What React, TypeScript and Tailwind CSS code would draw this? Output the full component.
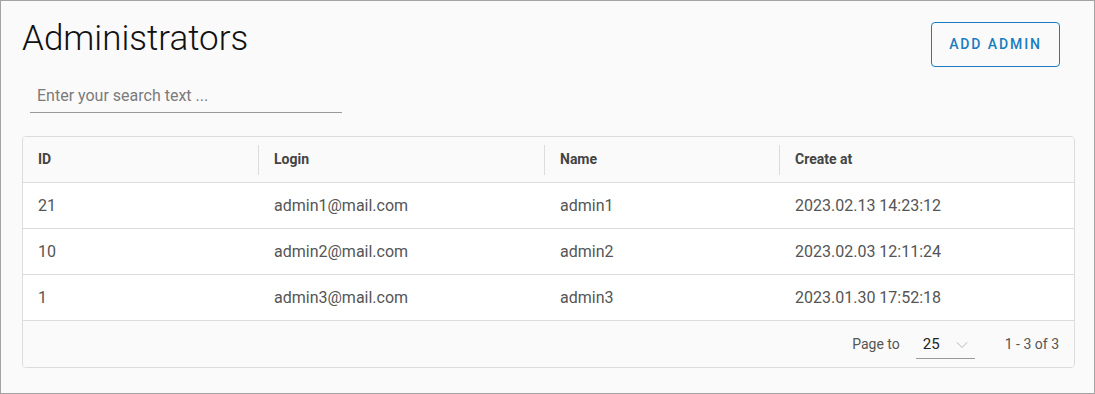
import { ChevronDown } from "lucide-react";

interface Admin {
  readonly id: number;
  readonly login: string;
  readonly name: string;
  readonly createdAt: string;
}

const admins: Admin[] = [
  { id: 21, login: "admin1@mail.com", name: "admin1", createdAt: "2023.02.13 14:23:12" },
  { id: 10, login: "admin2@mail.com", name: "admin2", createdAt: "2023.02.03 12:11:24" },
  { id: 1, login: "admin3@mail.com", name: "admin3", createdAt: "2023.01.30 17:52:18" },
];

const columns = [
  { label: "ID", width: "w-[235px]" },
  { label: "Login", width: "w-[286px]" },
  { label: "Name", width: "w-[235px]" },
  { label: "Create at", width: "flex-1" },
];

export default function App() {
  return (
    <div className="h-[394px] w-[1095px] border border-[#a3a3a3] bg-[#fafafa] font-['Roboto',sans-serif]">
      <div className="flex items-start justify-between pl-[21px] pr-[34px] pt-[21px]">
        <h1 className="text-[35px] font-light leading-[34px] text-[#111]">Administrators</h1>
        <button
          type="button"
          className="h-[45px] w-[129px] rounded-[4px] border border-[#1a7cc0] text-[14px] font-medium tracking-[1.9px] text-[#1a7cc0]"
        >
          ADD ADMIN
        </button>
      </div>

      <div className="ml-[29px] mt-[17px] w-[312px] border-b border-[#9a9a9a] pb-[4px] pl-[7px]">
        <input
          type="text"
          placeholder="Enter your search text ..."
          className="w-full bg-transparent text-[16px] leading-[22px] text-[#333] outline-none placeholder:text-[#7a7a7a]"
        />
      </div>

      <div className="ml-[21px] mr-[19px] mt-[23px] overflow-hidden rounded-[4px] border border-[#dcdcdc]">
        <div className="flex h-[46px] items-center border-b border-[#dcdcdc] bg-[#fafafa]">
          {columns.map((col, i) => (
            <div key={col.label} className={`${col.width} flex h-[30px] items-center ${i > 0 ? "border-l border-[#dcdcdc]" : ""} pl-[15px]`}>
              <span className="text-[14px] font-bold text-[#444]">{col.label}</span>
            </div>
          ))}
        </div>
        {admins.map((a) => (
          <div key={a.id} className="flex h-[46px] items-center border-b border-[#dcdcdc] bg-white text-[16px] text-[#555]">
            <div className="w-[235px] pl-[15px]">{a.id}</div>
            <div className="w-[286px] pl-[16px]">{a.login}</div>
            <div className="w-[235px] pl-[16px]">{a.name}</div>
            <div className="flex-1 pl-[16px]">{a.createdAt}</div>
          </div>
        ))}
        <div className="flex h-[46px] items-center justify-end bg-[#fafafa] pr-[15px] text-[14px] text-[#555]">
          <span>Page to</span>
          <div className="ml-[16px] flex h-[30px] w-[59px] items-center justify-between border-b border-[#9a9a9a] pl-[7px] pr-[3px] pt-[2px]">
            <span className="text-[15px] text-[#222]">25</span>
            <ChevronDown className="h-[20px] w-[20px] text-[#aaa]" strokeWidth={1} />
          </div>
          <span className="ml-[30px]">1 - 3 of 3</span>
        </div>
      </div>
    </div>
  );
}
